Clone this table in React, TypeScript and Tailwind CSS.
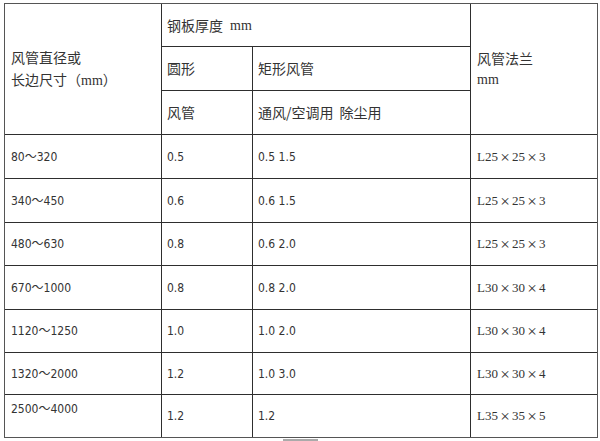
import React from "react";

const cjk = "font-['Noto_Sans_CJK_SC',sans-serif]";
const num = "font-['DejaVu_Sans_Condensed','Liberation_Sans','Noto_Sans_CJK_SC',sans-serif] text-[12px]";
const serif = "font-['Liberation_Serif','Noto_Sans_CJK_SC',serif]";

function Times() {
  return (
    <span className="inline-block w-[14px] text-center text-[17px] leading-none align-[-2px]">×</span>
  );
}

function Flange({ a, b, c }: { a: string; b: string; c: string }) {
  return (
    <span className={`${serif} text-[13px] whitespace-nowrap`}>
      L{a}
      <Times />
      {b}
      <Times />
      {c}
    </span>
  );
}

const rows: { d: string; r: string; t: string; f: [string, string, string]; h: string }[] = [
  { d: "80～320", r: "0.5", t: "0.5 1.5", f: ["25", "25", "3"], h: "h-[43px]" },
  { d: "340～450", r: "0.6", t: "0.6 1.5", f: ["25", "25", "3"], h: "h-[43px]" },
  { d: "480～630", r: "0.8", t: "0.6 2.0", f: ["25", "25", "3"], h: "h-[42px]" },
  { d: "670～1000", r: "0.8", t: "0.8 2.0", f: ["30", "30", "4"], h: "h-[43px]" },
  { d: "1120～1250", r: "1.0", t: "1.0 2.0", f: ["30", "30", "4"], h: "h-[42px]" },
  { d: "1320～2000", r: "1.2", t: "1.0 3.0", f: ["30", "30", "4"], h: "h-[41px]" },
];

export default function App() {
  return (
    <div className="w-[600px] h-[441px] bg-white text-[#333] overflow-hidden">
      <div className="pt-[3px] pl-[4px]">
        <div className="w-[594px] border border-[#555]">
          <div className="grid grid-cols-[156px_90px_217px_126px] gap-px bg-[#2e2e2e]">
            <div className={`row-span-3 bg-white flex flex-col justify-center pl-[6px] ${cjk} text-[14px] leading-[22px]`}>
              <div>风管直径或</div>
              <div>
                长边尺寸（<span className={`${serif} text-[14px]`}>mm</span>）
              </div>
            </div>
            <div className={`col-span-2 h-[42px] bg-white flex items-center pl-[5px] ${cjk} text-[14px]`}>
              钢板厚度<span className={`${serif} ml-[7px] text-[14px]`}>mm</span>
            </div>
            <div className={`row-span-3 bg-white flex flex-col justify-center pl-[6px] ${cjk} text-[14px] leading-[21px]`}>
              <div>风管法兰</div>
              <div className={`${serif} text-[14px]`}>mm</div>
            </div>
            <div className={`h-[43px] bg-white flex items-center pl-[5px] ${cjk} text-[14px]`}>圆形</div>
            <div className={`h-[43px] bg-white flex items-center pl-[5px] ${cjk} text-[14px]`}>矩形风管</div>
            <div className={`h-[43px] bg-white flex items-center pl-[5px] ${cjk} text-[14px]`}>风管</div>
            <div className={`h-[43px] bg-white flex items-center pl-[5px] ${cjk} text-[14px] whitespace-pre [word-spacing:3px]`}>
              通风/空调用 除尘用
            </div>

            {rows.map((r) => (
              <React.Fragment key={r.d}>
                <div className={`${r.h} bg-white flex items-center pl-[6px] ${num}`}>{r.d}</div>
                <div className={`${r.h} bg-white flex items-center pl-[5px] ${num}`}>{r.r}</div>
                <div className={`${r.h} bg-white flex items-center pl-[5px] ${num}`}>{r.t}</div>
                <div className={`${r.h} bg-white flex items-center pl-[6px]`}>
                  <Flange a={r.f[0]} b={r.f[1]} c={r.f[2]} />
                </div>
              </React.Fragment>
            ))}

            <div className={`h-[42px] bg-white pl-[6px] pt-[5px] ${num}`}>2500～4000</div>
            <div className={`h-[42px] bg-white flex items-center pl-[5px] ${num}`}>1.2</div>
            <div className={`h-[42px] bg-white flex items-center pl-[5px] ${num}`}>1.2</div>
            <div className="h-[42px] bg-white flex items-center pl-[6px]">
              <Flange a="35" b="35" c="5" />
            </div>
          </div>
        </div>
        <div className="ml-[279px] mt-px w-[35px] h-[2px] bg-[#aaa]" />
      </div>
    </div>
  );
}
